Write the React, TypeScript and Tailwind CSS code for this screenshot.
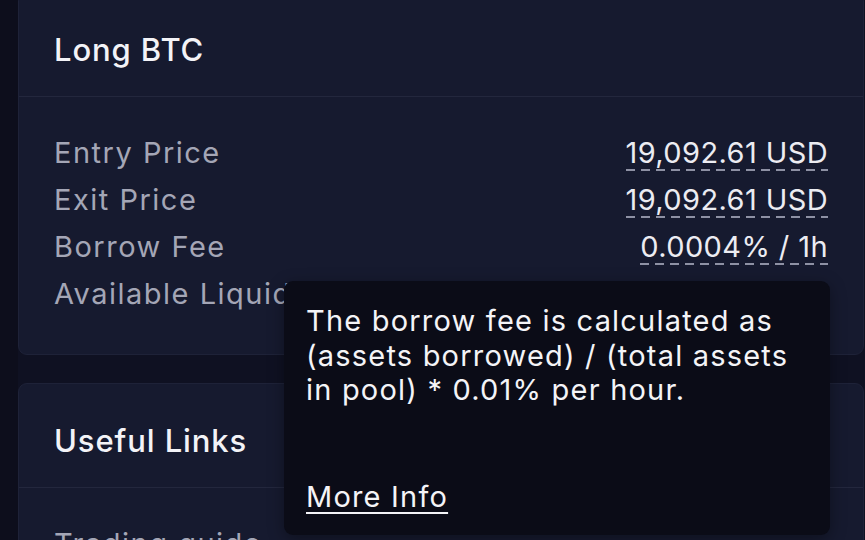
import type { ReactNode } from "react";

type Row = {
  label: string;
  value?: string;
};

const ROWS: Row[] = [
  { label: "Entry Price", value: "19,092.61 USD" },
  { label: "Exit Price", value: "19,092.61 USD" },
  { label: "Borrow Fee", value: "0.0004% / 1h" },
  { label: "Available Liquidity" },
];

function DashedValue({ children }: { children: ReactNode }) {
  return (
    <span className="relative inline-block tracking-[0.4px] text-[#ececf2]">
      {children}
      <span className="absolute left-0 right-0 bottom-[3px] h-[2px] bg-[linear-gradient(to_right,#8e91a4_62%,transparent_0)] bg-[length:15px_2px] bg-repeat-x" />
    </span>
  );
}

function Card({ title, children, className }: { title: string; children: ReactNode; className?: string }) {
  return (
    <div className={`rounded-[9px] border border-[#1e2238] bg-[#161a2f] ${className ?? ""}`}>
      <div className="flex h-[104px] items-center border-b border-[#23273d] px-[35px] pt-3">
        <h2 className="text-[31px] font-medium tracking-[0.9px] text-[#f3f3f7]">{title}</h2>
      </div>
      {children}
    </div>
  );
}

export default function App() {
  return (
    <div
      className="flex h-[540px] w-[865px] overflow-hidden bg-[#0f1122]"
      style={{ fontFamily: "Inter, 'Noto Sans', sans-serif" }}
    >
      <div className="w-[18px] shrink-0 bg-[#0d0e1c]" />
      <div className="relative flex flex-1 flex-col gap-[28px] pr-px">
        <Card title="Long BTC" className="-mt-[8px]">
          <div className="flex flex-col px-[35px] pt-[32px] pb-[37px]">
            {ROWS.map((row) => (
              <div key={row.label} className="flex h-[47px] items-center justify-between text-[29px]">
                <span className="tracking-[1.5px] text-[#a4a6b6]">{row.label}</span>
                {row.value ? <DashedValue>{row.value}</DashedValue> : null}
              </div>
            ))}
          </div>
        </Card>

        <Card title="Useful Links">
          <div className="flex flex-col px-[35px] pt-[32px]">
            <div className="flex h-[47px] items-center text-[29px] tracking-[1.5px] text-[#a4a6b6]">Trading guide</div>
          </div>
        </Card>

        {/* borrow fee tooltip */}
        <div className="absolute left-[266px] top-[281px] w-[546px] rounded-[9px] bg-[#0b0c17] px-[22px] pt-[23px] pb-[21px] text-[29px] leading-[34.5px] tracking-[1.2px] text-[#f4f4f7] shadow-[0_4px_16px_rgba(0,0,0,0.35)]">
          <p>
            The borrow fee is calculated as
            <br />
            (assets borrowed) / (total assets
            <br />
            in pool) * 0.01% per hour.
          </p>
          <a className="mt-[72px] inline-block underline decoration-2 underline-offset-[5px]" href="#">
            More Info
          </a>
        </div>
      </div>
    </div>
  );
}
